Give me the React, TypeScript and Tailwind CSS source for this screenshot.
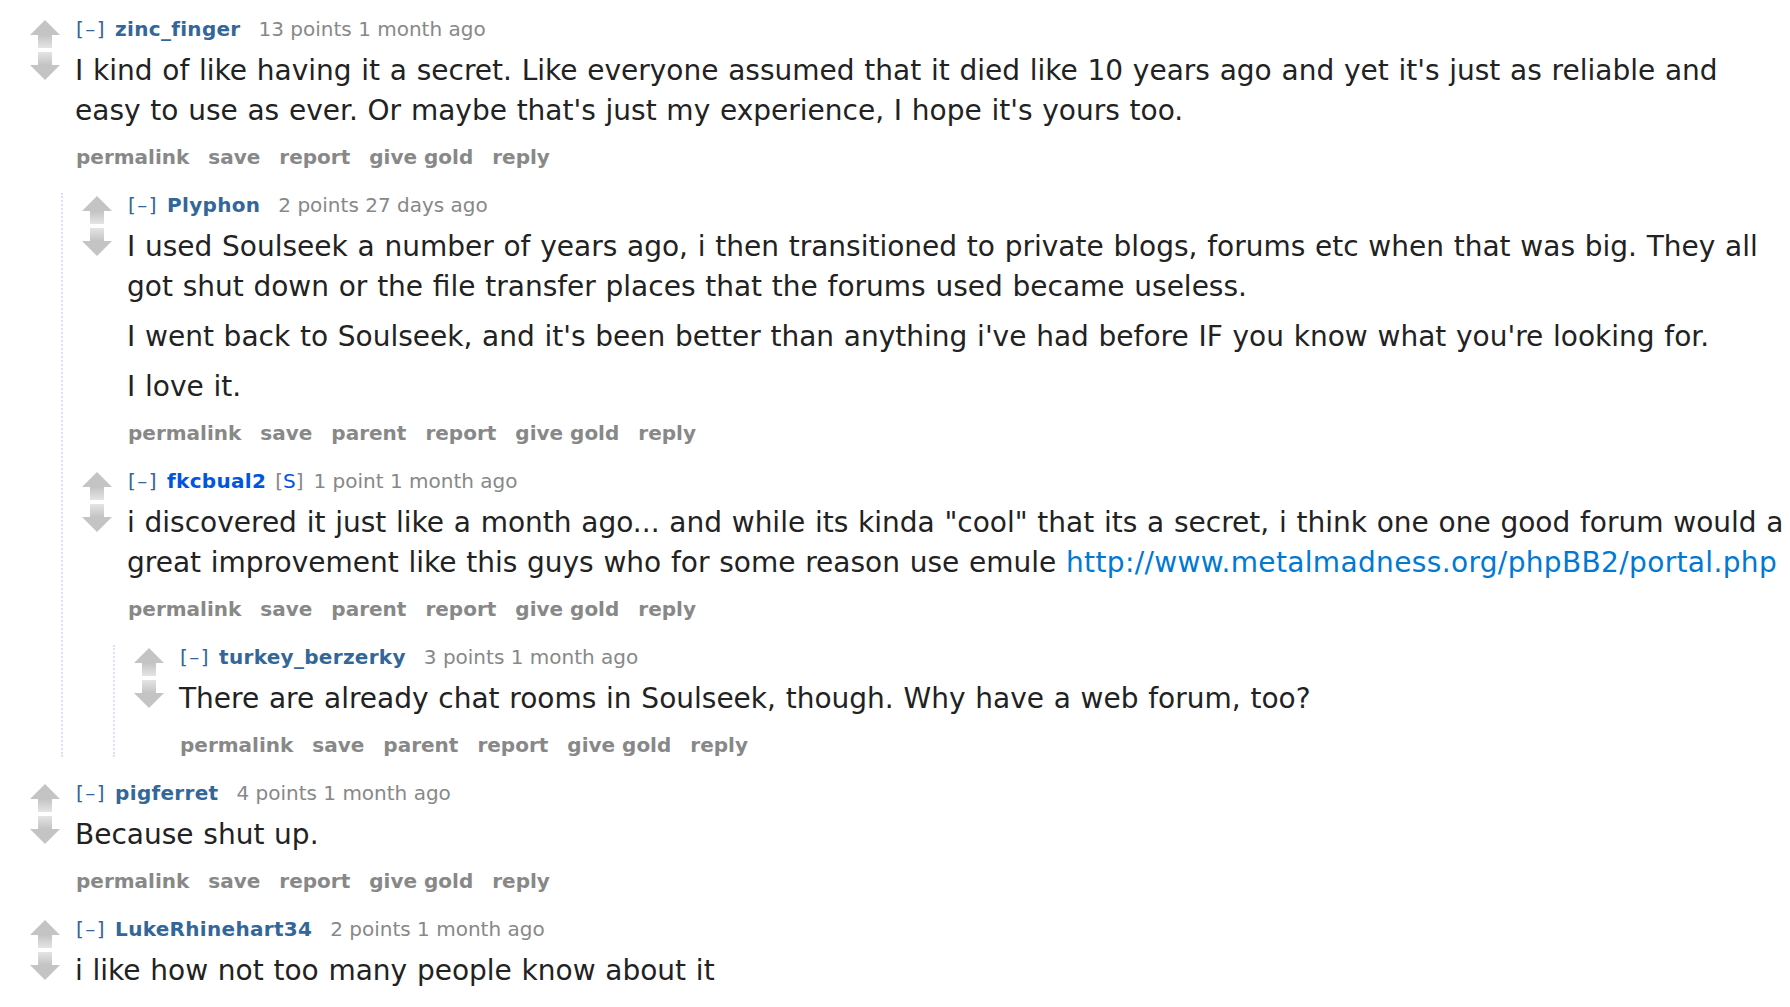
import React from "react";

type Para = React.ReactNode[];
type C = {
  user: string;
  submitter?: boolean;
  score: string;
  time: string;
  paras: Para[];
  parent?: boolean;
  children?: C[];
};

function Arrows() {
  return (
    <div className="flex w-[30px] shrink-0 flex-col gap-[4px] pt-[3px]">
      <svg width="30" height="28" viewBox="0 0 30 28">
        <defs>
          <linearGradient id="gu" x1="0" y1="0" x2="0" y2="1">
            <stop offset="0" stopColor="#c4c4c4" />
            <stop offset="1" stopColor="#e4e4e4" />
          </linearGradient>
        </defs>
        <polygon points="15,0 30,15 0,15" fill="#c4c4c4" />
        <rect x="8" y="15" width="14" height="13" fill="url(#gu)" />
      </svg>
      <svg width="30" height="28" viewBox="0 0 30 28">
        <defs>
          <linearGradient id="gd" x1="0" y1="0" x2="0" y2="1">
            <stop offset="0" stopColor="#e4e4e4" />
            <stop offset="1" stopColor="#c4c4c4" />
          </linearGradient>
        </defs>
        <rect x="8" y="0" width="14" height="13" fill="url(#gd)" />
        <polygon points="0,13 30,13 15,28" fill="#c4c4c4" />
      </svg>
    </div>
  );
}

function Comment({ c }: { c: C }) {
  const buttons = c.parent
    ? ["permalink", "save", "parent", "report", "give gold", "reply"]
    : ["permalink", "save", "report", "give gold", "reply"];
  return (
    <div className="flex flex-col">
      <div className="flex gap-[16px]">
        <Arrows />
        <div className="flex min-w-0 flex-col">
          <div className="flex h-[24px] items-center whitespace-nowrap text-[20px] leading-[24px] text-[#888]">
            <span className="tracking-[1.5px] text-[#369]">[–]</span>
            <span
              className={
                c.submitter
                  ? "ml-[9px] font-bold tracking-[0.3px] text-[#0055df]"
                  : "ml-[9px] font-bold tracking-[0.3px] text-[#369]"
              }
            >
              {c.user}
            </span>
            {c.submitter ? (
              <span className="ml-[9px]">
                [<span className="text-[#0055df]">S</span>]
              </span>
            ) : null}
            <span className={c.submitter ? "ml-[10px]" : "ml-[18px]"}>
              {c.score} {c.time}
            </span>
          </div>
          <div className="-ml-[1px] mt-[10px] flex flex-col gap-[10px] whitespace-nowrap text-[28px] leading-[40px] text-[#222] [word-spacing:0.85px]">
            {c.paras.map((p, i) => (
              <p key={i}>
                {p.map((line, j) => (
                  <React.Fragment key={j}>
                    {j > 0 ? <br /> : null}
                    {line}
                  </React.Fragment>
                ))}
              </p>
            ))}
          </div>
          <div className="mt-[14px] flex h-[24px] items-center gap-[19px] whitespace-nowrap text-[20px] font-bold leading-[24px] text-[#888]">
            {buttons.map((b) => (
              <span key={b}>{b}</span>
            ))}
          </div>
        </div>
      </div>
      {c.children && c.children.length > 0 ? (
        <div className="ml-[31px] mt-[24px] flex flex-col gap-[24px] border-l-2 border-dotted border-[#ddf] pl-[19px]">
          {c.children.map((ch, i) => (
            <Comment key={i} c={ch} />
          ))}
        </div>
      ) : null}
    </div>
  );
}

const data: C[] = [
  {
    user: "zinc_finger",
    score: "13 points",
    time: "1 month ago",
    paras: [
      [
        "I kind of like having it a secret. Like everyone assumed that it died like 10 years ago and yet it's just as reliable and",
        "easy to use as ever. Or maybe that's just my experience, I hope it's yours too.",
      ],
    ],
    children: [
      {
        user: "Plyphon",
        score: "2 points",
        time: "27 days ago",
        parent: true,
        paras: [
          [
            "I used Soulseek a number of years ago, i then transitioned to private blogs, forums etc when that was big. They all",
            "got shut down or the file transfer places that the forums used became useless.",
          ],
          [
            "I went back to Soulseek, and it's been better than anything i've had before IF you know what you're looking for.",
          ],
          ["I love it."],
        ],
      },
      {
        user: "fkcbual2",
        submitter: true,
        score: "1 point",
        time: "1 month ago",
        parent: true,
        paras: [
          [
            'i discovered it just like a month ago... and while its kinda "cool" that its a secret, i think one one good forum would a',
            <>
              great improvement like this guys who for some reason use emule{" "}
              <span className="tracking-[0.35px] text-[#0079d3]">
                http://www.metalmadness.org/phpBB2/portal.php
              </span>
            </>,
          ],
        ],
        children: [
          {
            user: "turkey_berzerky",
            score: "3 points",
            time: "1 month ago",
            parent: true,
            paras: [
              [
                "There are already chat rooms in Soulseek, though. Why have a web forum, too?",
              ],
            ],
          },
        ],
      },
    ],
  },
  {
    user: "pigferret",
    score: "4 points",
    time: "1 month ago",
    paras: [["Because shut up."]],
  },
  {
    user: "LukeRhinehart34",
    score: "2 points",
    time: "1 month ago",
    paras: [["i like how not too many people know about it"]],
  },
];

export default function App() {
  return (
    <div className="h-[1007px] w-[1790px] overflow-hidden bg-white font-['DejaVu_Sans',Verdana,sans-serif]">
      <div className="flex flex-col gap-[24px] pl-[30px] pt-[17px]">
        {data.map((c, i) => (
          <Comment key={i} c={c} />
        ))}
      </div>
    </div>
  );
}
